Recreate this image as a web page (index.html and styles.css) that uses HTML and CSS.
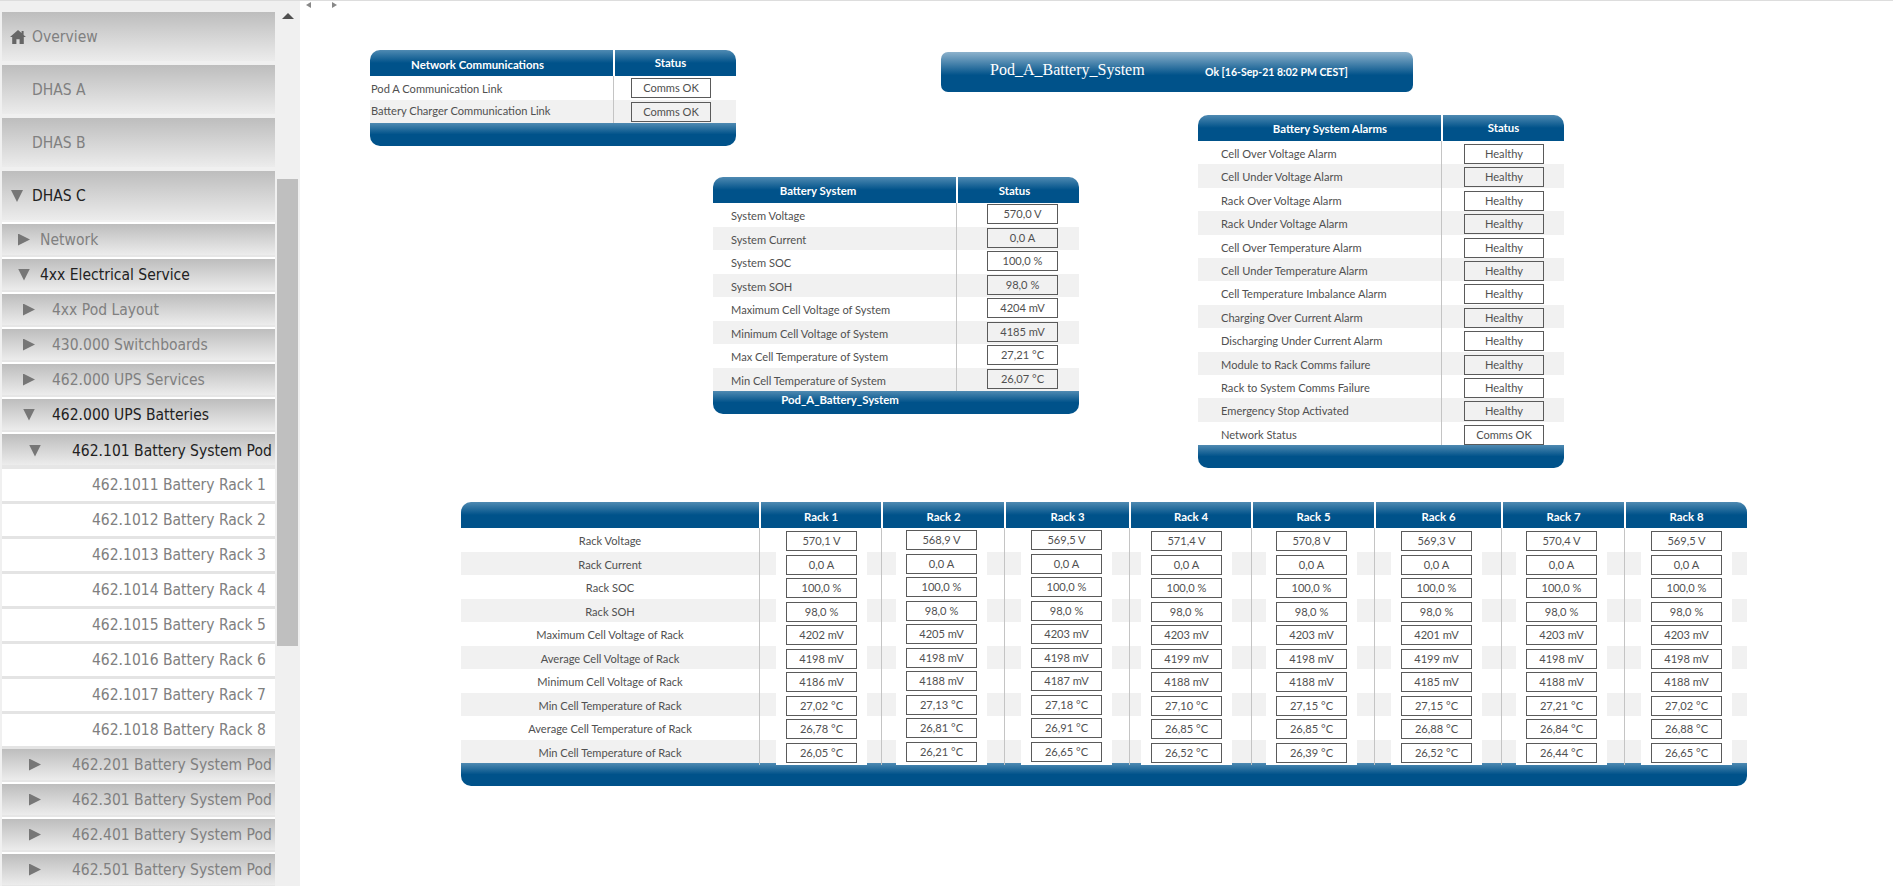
FILE: index.html
```html
<!DOCTYPE html>
<html lang="en">
<head>
  <meta charset="UTF-8" />
  <title>Pod_A_Battery_System</title>
  <link rel="stylesheet" href="styles.css">
</head>
<body>

  <nav class="sidebar">
    <div class="nav-list">
      <a class="nav-top">
        <svg class="home" viewBox="0 0 16 14"><path d="M8 0 0 7h2.2v7h4.2V9.2h3.2V14h4.2V7H16l-2.4-2.1V1h-2v2.1z"/></svg>
        <span>Overview</span>
      </a>
      <a class="nav-top"><span>DHAS A</span></a>
      <a class="nav-top"><span>DHAS B</span></a>
      <a class="nav-top open"><i class="tri down"></i><span>DHAS C</span></a>

      <a class="nav-sub lvl1"><i class="tri right"></i><span>Network</span></a>
      <a class="nav-sub lvl1 open"><i class="tri down"></i><span>4xx Electrical Service</span></a>
      <a class="nav-sub lvl2"><i class="tri right"></i><span>4xx Pod Layout</span></a>
      <a class="nav-sub lvl2"><i class="tri right"></i><span>430.000 Switchboards</span></a>
      <a class="nav-sub lvl2"><i class="tri right"></i><span>462.000 UPS Services</span></a>
      <a class="nav-sub lvl2 open"><i class="tri down"></i><span>462.000 UPS Batteries</span></a>
      <a class="nav-sub lvl3 open"><i class="tri down"></i><span>462.101 Battery System Pod</span></a>
      <a class="nav-leaf"><span>462.1011 Battery Rack 1</span></a>
      <a class="nav-leaf"><span>462.1012 Battery Rack 2</span></a>
      <a class="nav-leaf"><span>462.1013 Battery Rack 3</span></a>
      <a class="nav-leaf"><span>462.1014 Battery Rack 4</span></a>
      <a class="nav-leaf"><span>462.1015 Battery Rack 5</span></a>
      <a class="nav-leaf"><span>462.1016 Battery Rack 6</span></a>
      <a class="nav-leaf"><span>462.1017 Battery Rack 7</span></a>
      <a class="nav-leaf"><span>462.1018 Battery Rack 8</span></a>
      <a class="nav-sub lvl3"><i class="tri right"></i><span>462.201 Battery System Pod</span></a>
      <a class="nav-sub lvl3"><i class="tri right"></i><span>462.301 Battery System Pod</span></a>
      <a class="nav-sub lvl3"><i class="tri right"></i><span>462.401 Battery System Pod</span></a>
      <a class="nav-sub lvl3"><i class="tri right"></i><span>462.501 Battery System Pod</span></a>
    </div>
    <div class="scrollbar">
      <i class="scroll-up"></i>
      <div class="scroll-thumb"></div>
    </div>
  </nav>

  <main class="canvas">
    <div class="splitter"><i class="arrow-left"></i><i class="arrow-right"></i></div>

    <!-- widgets sit on a free canvas, same as the dashboard designer placed them -->
    <section class="panel panel-net">
      <div class="row head">
        <div class="col-name">Network Communications</div>
        <div class="col-status">Status</div>
      </div>
      <div class="row"><div class="col-name">Pod A Communication Link</div><div class="col-status"><div class="box">Comms OK</div></div></div>
      <div class="row"><div class="col-name">Battery Charger Communication Link</div><div class="col-status"><div class="box">Comms OK</div></div></div>
      <div class="foot"></div>
    </section>

    <section class="title-bar">
      <h1>Pod_A_Battery_System</h1>
      <span class="title-status">Ok [16-Sep-21 8:02 PM CEST]</span>
    </section>

    <section class="panel panel-sys">
      <div class="row head">
        <div class="col-name">Battery System</div>
        <div class="col-status">Status</div>
      </div>
      <div class="row"><div class="col-name">System Voltage</div><div class="col-status"><div class="box">570,0 V</div></div></div>
      <div class="row"><div class="col-name">System Current</div><div class="col-status"><div class="box">0,0 A</div></div></div>
      <div class="row"><div class="col-name">System SOC</div><div class="col-status"><div class="box">100,0 %</div></div></div>
      <div class="row"><div class="col-name">System SOH</div><div class="col-status"><div class="box">98,0 %</div></div></div>
      <div class="row"><div class="col-name">Maximum Cell Voltage of System</div><div class="col-status"><div class="box">4204 mV</div></div></div>
      <div class="row"><div class="col-name">Minimum Cell Voltage of System</div><div class="col-status"><div class="box">4185 mV</div></div></div>
      <div class="row"><div class="col-name">Max Cell Temperature of System</div><div class="col-status"><div class="box">27,21 °C</div></div></div>
      <div class="row"><div class="col-name">Min Cell Temperature of System</div><div class="col-status"><div class="box">26,07 °C</div></div></div>
      <div class="foot">Pod_A_Battery_System</div>
    </section>

    <section class="panel panel-alarm">
      <div class="row head">
        <div class="col-name">Battery System Alarms</div>
        <div class="col-status">Status</div>
      </div>
      <div class="row"><div class="col-name">Cell Over Voltage Alarm</div><div class="col-status"><div class="box">Healthy</div></div></div>
      <div class="row"><div class="col-name">Cell Under Voltage Alarm</div><div class="col-status"><div class="box">Healthy</div></div></div>
      <div class="row"><div class="col-name">Rack Over Voltage Alarm</div><div class="col-status"><div class="box">Healthy</div></div></div>
      <div class="row"><div class="col-name">Rack Under Voltage Alarm</div><div class="col-status"><div class="box">Healthy</div></div></div>
      <div class="row"><div class="col-name">Cell Over Temperature Alarm</div><div class="col-status"><div class="box">Healthy</div></div></div>
      <div class="row"><div class="col-name">Cell Under Temperature Alarm</div><div class="col-status"><div class="box">Healthy</div></div></div>
      <div class="row"><div class="col-name">Cell Temperature Imbalance Alarm</div><div class="col-status"><div class="box">Healthy</div></div></div>
      <div class="row"><div class="col-name">Charging Over Current Alarm</div><div class="col-status"><div class="box">Healthy</div></div></div>
      <div class="row"><div class="col-name">Discharging Under Current Alarm</div><div class="col-status"><div class="box">Healthy</div></div></div>
      <div class="row"><div class="col-name">Module to Rack Comms failure</div><div class="col-status"><div class="box">Healthy</div></div></div>
      <div class="row"><div class="col-name">Rack to System Comms Failure</div><div class="col-status"><div class="box">Healthy</div></div></div>
      <div class="row"><div class="col-name">Emergency Stop Activated</div><div class="col-status"><div class="box">Healthy</div></div></div>
      <div class="row"><div class="col-name">Network Status</div><div class="col-status"><div class="box">Comms OK</div></div></div>
      <div class="foot"></div>
    </section>

    <section class="panel panel-racks">
      <div class="rack-row head">
        <div></div>
        <div>Rack 1</div><div>Rack 2</div><div>Rack 3</div><div>Rack 4</div><div>Rack 5</div><div>Rack 6</div><div>Rack 7</div><div>Rack 8</div>
      </div>
      <div class="rack-row">
        <div class="rack-label">Rack Voltage</div>
        <div class="rack-cell"><div class="box">570,1 V</div></div><div class="rack-cell"><div class="box">568,9 V</div></div><div class="rack-cell"><div class="box">569,5 V</div></div><div class="rack-cell"><div class="box">571,4 V</div></div><div class="rack-cell"><div class="box">570,8 V</div></div><div class="rack-cell"><div class="box">569,3 V</div></div><div class="rack-cell"><div class="box">570,4 V</div></div><div class="rack-cell"><div class="box">569,5 V</div></div>
      </div>
      <div class="rack-row">
        <div class="rack-label">Rack Current</div>
        <div class="rack-cell"><div class="box">0,0 A</div></div><div class="rack-cell"><div class="box">0,0 A</div></div><div class="rack-cell"><div class="box">0,0 A</div></div><div class="rack-cell"><div class="box">0,0 A</div></div><div class="rack-cell"><div class="box">0,0 A</div></div><div class="rack-cell"><div class="box">0,0 A</div></div><div class="rack-cell"><div class="box">0,0 A</div></div><div class="rack-cell"><div class="box">0,0 A</div></div>
      </div>
      <div class="rack-row">
        <div class="rack-label">Rack SOC</div>
        <div class="rack-cell"><div class="box">100,0 %</div></div><div class="rack-cell"><div class="box">100,0 %</div></div><div class="rack-cell"><div class="box">100,0 %</div></div><div class="rack-cell"><div class="box">100,0 %</div></div><div class="rack-cell"><div class="box">100,0 %</div></div><div class="rack-cell"><div class="box">100,0 %</div></div><div class="rack-cell"><div class="box">100,0 %</div></div><div class="rack-cell"><div class="box">100,0 %</div></div>
      </div>
      <div class="rack-row">
        <div class="rack-label">Rack SOH</div>
        <div class="rack-cell"><div class="box">98,0 %</div></div><div class="rack-cell"><div class="box">98,0 %</div></div><div class="rack-cell"><div class="box">98,0 %</div></div><div class="rack-cell"><div class="box">98,0 %</div></div><div class="rack-cell"><div class="box">98,0 %</div></div><div class="rack-cell"><div class="box">98,0 %</div></div><div class="rack-cell"><div class="box">98,0 %</div></div><div class="rack-cell"><div class="box">98,0 %</div></div>
      </div>
      <div class="rack-row">
        <div class="rack-label">Maximum Cell Voltage of Rack</div>
        <div class="rack-cell"><div class="box">4202 mV</div></div><div class="rack-cell"><div class="box">4205 mV</div></div><div class="rack-cell"><div class="box">4203 mV</div></div><div class="rack-cell"><div class="box">4203 mV</div></div><div class="rack-cell"><div class="box">4203 mV</div></div><div class="rack-cell"><div class="box">4201 mV</div></div><div class="rack-cell"><div class="box">4203 mV</div></div><div class="rack-cell"><div class="box">4203 mV</div></div>
      </div>
      <div class="rack-row">
        <div class="rack-label">Average Cell Voltage of Rack</div>
        <div class="rack-cell"><div class="box">4198 mV</div></div><div class="rack-cell"><div class="box">4198 mV</div></div><div class="rack-cell"><div class="box">4198 mV</div></div><div class="rack-cell"><div class="box">4199 mV</div></div><div class="rack-cell"><div class="box">4198 mV</div></div><div class="rack-cell"><div class="box">4199 mV</div></div><div class="rack-cell"><div class="box">4198 mV</div></div><div class="rack-cell"><div class="box">4198 mV</div></div>
      </div>
      <div class="rack-row">
        <div class="rack-label">Minimum Cell Voltage of Rack</div>
        <div class="rack-cell"><div class="box">4186 mV</div></div><div class="rack-cell"><div class="box">4188 mV</div></div><div class="rack-cell"><div class="box">4187 mV</div></div><div class="rack-cell"><div class="box">4188 mV</div></div><div class="rack-cell"><div class="box">4188 mV</div></div><div class="rack-cell"><div class="box">4185 mV</div></div><div class="rack-cell"><div class="box">4188 mV</div></div><div class="rack-cell"><div class="box">4188 mV</div></div>
      </div>
      <div class="rack-row">
        <div class="rack-label">Min Cell Temperature of Rack</div>
        <div class="rack-cell"><div class="box">27,02 °C</div></div><div class="rack-cell"><div class="box">27,13 °C</div></div><div class="rack-cell"><div class="box">27,18 °C</div></div><div class="rack-cell"><div class="box">27,10 °C</div></div><div class="rack-cell"><div class="box">27,15 °C</div></div><div class="rack-cell"><div class="box">27,15 °C</div></div><div class="rack-cell"><div class="box">27,21 °C</div></div><div class="rack-cell"><div class="box">27,02 °C</div></div>
      </div>
      <div class="rack-row">
        <div class="rack-label">Average Cell Temperature of Rack</div>
        <div class="rack-cell"><div class="box">26,78 °C</div></div><div class="rack-cell"><div class="box">26,81 °C</div></div><div class="rack-cell"><div class="box">26,91 °C</div></div><div class="rack-cell"><div class="box">26,85 °C</div></div><div class="rack-cell"><div class="box">26,85 °C</div></div><div class="rack-cell"><div class="box">26,88 °C</div></div><div class="rack-cell"><div class="box">26,84 °C</div></div><div class="rack-cell"><div class="box">26,88 °C</div></div>
      </div>
      <div class="rack-row">
        <div class="rack-label">Min Cell Temperature of Rack</div>
        <div class="rack-cell"><div class="box">26,05 °C</div></div><div class="rack-cell"><div class="box">26,21 °C</div></div><div class="rack-cell"><div class="box">26,65 °C</div></div><div class="rack-cell"><div class="box">26,52 °C</div></div><div class="rack-cell"><div class="box">26,39 °C</div></div><div class="rack-cell"><div class="box">26,52 °C</div></div><div class="rack-cell"><div class="box">26,44 °C</div></div><div class="rack-cell"><div class="box">26,65 °C</div></div>
      </div>
      <div class="foot"></div>
    </section>
  </main>

</body>
</html>
```
FILE: styles.css
```css
html, body {
  margin: 0;
  height: 100%;
  overflow: hidden;
}

body {
  display: flex;
  height: 886px;
  background-color: white;
  border-top: 1px solid #dddddd;
  box-sizing: border-box;
  font-family: Lato, "Noto Sans", sans-serif;
  font-size: 11.1px;
  color: #505050;
}

/* sidebar */
.sidebar {
  flex: 0 0 300px;
  display: flex;
  background-color: #f0f0f0;
  overflow: hidden;
}

.nav-list {
  width: 273px;
  margin-left: 2px;
  padding-top: 11px;
  font-family: "DejaVu Sans", sans-serif;
  font-stretch: condensed;
  font-size: 15.5px;
  color: #808080;
}

.nav-list a {
  display: flex;
  align-items: center;
  white-space: nowrap;
  overflow: hidden;
  box-sizing: border-box;
}

.nav-list .open {
  color: #222222;
}

.nav-top {
  height: 49px;
  margin-bottom: 4px;
  padding-left: 30px;
  position: relative;
  background: linear-gradient(#bdbdbd, #ececec);
}

.nav-top:nth-child(4) {
  margin-bottom: 0;
}

.nav-sub {
  height: 33px;
  margin-bottom: 2px;
  padding-bottom: 2px;
  background: linear-gradient(#bdbdbd 0, #ececec 31px, #e6e6e6 31px);
}

.nav-top + .nav-sub {
  margin-top: 4px;
  box-shadow: 0 -2px 0 white;
}

.nav-sub + .nav-sub {
  box-shadow: 0 -2px 0 white;
}

.nav-leaf {
  height: 35px;
  padding-left: 90px;
  padding-bottom: 3px;
  background: linear-gradient(white 0, white 32px, #e4e4e4 32px);
}

.nav-sub:has(+ .nav-leaf),
.nav-leaf + .nav-sub {
  margin-bottom: 2px;
}

.nav-sub:has(+ .nav-leaf) {
  height: 35px;
  margin-bottom: 0;
}

.lvl1 { padding-left: 16px; }
.lvl2 { padding-left: 21px; }
.lvl3 { padding-left: 27px; }

.lvl1 span { margin-left: 10px; }
.lvl2 span { margin-left: 17px; }
.lvl3 span { margin-left: 31px; }

.home {
  position: absolute;
  left: 8px;
  top: 18px;
  width: 16px;
  height: 14px;
  fill: #666666;
}

.tri {
  flex: none;
  display: block;
  width: 12px;
  height: 12px;
  background-color: #777777;
}

.tri.down {
  clip-path: polygon(0 0, 100% 0, 50% 100%);
}

.tri.right {
  clip-path: polygon(0 0, 100% 50%, 0 100%);
}

.nav-top .tri {
  position: absolute;
  left: 9px;
  top: 19px;
}

.scrollbar {
  position: relative;
  flex: 1;
}

.scroll-up {
  position: absolute;
  left: 7px;
  top: 12px;
  width: 0;
  height: 0;
  border-left: 6px solid transparent;
  border-right: 6px solid transparent;
  border-bottom: 6px solid #505050;
}

.scroll-thumb {
  position: absolute;
  left: 2px;
  right: 2px;
  top: 178px;
  height: 467px;
  background-color: #bfbfbf;
}

/* canvas */
.canvas {
  position: relative;
  flex: 1;
}

.splitter {
  position: absolute;
  left: 6px;
  top: 1px;
  display: flex;
  gap: 21px;
}

.arrow-left,
.arrow-right {
  width: 0;
  height: 0;
  border-top: 3px solid transparent;
  border-bottom: 3px solid transparent;
}

.arrow-left { border-right: 5px solid #888888; }
.arrow-right { border-left: 5px solid #888888; }

.panel {
  position: absolute;
  width: 366px;
  border-radius: 10px;
  overflow: hidden;
  background-color: white;
}

.panel-net { left: 70px; top: 49px; --name: 243px; --box: 80px; --box-left: 17px; }
.panel-sys { left: 413px; top: 176px; --name: 243px; --box: 71px; --box-left: 30px; }
.panel-alarm { left: 898px; top: 114px; --name: 243px; --box: 80px; --box-left: 22px; }
.panel-racks { left: 161px; top: 501px; width: 1286px; --box: 71px; }

.row {
  display: flex;
  height: 23.5px;
}

.panel-alarm .row {
  height: 23.4px;
}

.row:nth-child(odd):not(.head),
.rack-row:nth-child(odd):not(.head) {
  background-color: #f1f1f1;
}

.row .col-name {
  flex: 0 0 var(--name);
  box-sizing: border-box;
  line-height: 25px;
  white-space: nowrap;
  overflow: hidden;
}

.col-status {
  flex: 1;
  border-left: 1px solid #c4c4c4;
  padding-left: var(--box-left);
  padding-top: 2px;
}

.panel-net .row .col-name { padding-left: 1px; }
.panel-sys .row .col-name { padding-left: 18px; }
.panel-alarm .row .col-name { padding-left: 23px; }

.panel-net .row:nth-child(3) .col-name { line-height: 22px; }

.panel-sys .col-status { padding-top: 1px; }
.panel-alarm .col-status { padding-top: 3px; }

.box {
  box-sizing: border-box;
  width: var(--box);
  height: 20px;
  border: 1px solid #5a5a5a;
  line-height: 18px;
  text-align: center;
  white-space: nowrap;
}

.head,
.foot {
  background: linear-gradient(#4f8ab2, #00528a 50%);
  color: white;
  font-size: 11.4px;
  font-weight: 700;
}

.row.head {
  height: 26px;
}

.row.head .col-name {
  line-height: 29px;
  text-align: center;
  padding-left: 0;
}

.row.head .col-status {
  padding: 0;
  border-left: 2px solid white;
  line-height: 26px;
  text-align: center;
}

.panel-sys .row.head .col-name { line-height: 28px; padding-right: 33px; }
.panel-sys .row.head .col-status { line-height: 28px; padding-right: 8px; }
.panel-alarm .row.head .col-name { line-height: 27px; padding-left: 21px; }
.panel-net .row.head .col-name { padding-right: 28px; }
.panel-net .row.head .col-status { padding-right: 10px; }

.foot {
  height: 23px;
  line-height: 18px;
  text-align: center;
}

.panel-sys .foot {
  padding-right: 112px;
}

/* title bar */
.title-bar {
  position: absolute;
  left: 641px;
  top: 51px;
  width: 472px;
  height: 40px;
  display: flex;
  align-items: center;
  box-sizing: border-box;
  padding-left: 49px;
  border-radius: 7px;
  background: linear-gradient(#8db2cc, #00528a 58%);
  color: white;
}

.title-bar h1 {
  margin: 0 0 4px;
  width: 215px;
  font-family: "Liberation Serif", serif;
  font-size: 16px;
  font-weight: 400;
}

.title-status {
  font-size: 10.5px;
  font-weight: 700;
}

/* rack table */
.rack-row {
  display: grid;
  grid-template-columns: 298px 122px 123px 125px 122px 123px 127px 123px 123px;
  height: 23.5px;
}

.rack-row.head {
  height: 26px;
  line-height: 29px;
  text-align: center;
}

.rack-row.head div + div {
  border-left: 2px solid white;
}

.rack-label {
  line-height: 25px;
  text-align: center;
}

.rack-cell {
  border-left: 1px solid #c4c4c4;
  padding-left: 26px;
  overflow: hidden;
}

/* white strip round each value, the stripes only show between the columns */
.rack-cell .box {
  margin-top: 3px;
  box-shadow: 0 0 0 10px white;
  background-color: white;
}

.rack-row .rack-cell:nth-child(3),
.rack-row .rack-cell:nth-child(6),
.rack-row .rack-cell:nth-child(8) { padding-left: 24px; }
.rack-row .rack-cell:nth-child(5) { padding-left: 21px; }
.rack-row .rack-cell:nth-child(3) .box,
.rack-row .rack-cell:nth-child(4) .box { margin-top: 2px; }
```
